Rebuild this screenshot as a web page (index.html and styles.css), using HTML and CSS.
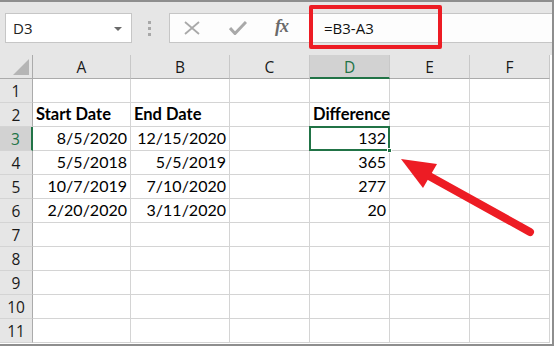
FILE: index.html
```html
<!DOCTYPE html>
<html>
<head>
<meta charset="utf-8">
<link rel="stylesheet" href="styles.css">
</head>
<body>
<div class="frame">
  <div class="toolbar">
    <div class="namebox">
      <span class="name">D3</span>
      <span class="caret"></span>
    </div>
    <div class="grip"><i></i><i></i><i></i></div>
    <div class="formula">
      <div class="icons">
        <svg class="ico" width="16" height="14" viewBox="0 0 16 14"><path d="M1 1 L15 13 M15 1 L1 13" stroke="#a9a9a9" stroke-width="1.8" fill="none"/></svg>
        <svg class="ico" width="18" height="14" viewBox="0 0 18 14"><path d="M1 7 L6 12.5 L17 1" stroke="#a9a9a9" stroke-width="3" fill="none"/></svg>
        <span class="fx">fx</span>
      </div>
      <div class="ftext">=B3-A3</div>
      <div class="redbox"></div>
    </div>
  </div>
  <div class="sheet">
    <div class="grid">
      <div class="hd corner"><span class="tri"></span></div>
      <div class="hd col">A</div>
      <div class="hd col">B</div>
      <div class="hd col">C</div>
      <div class="hd col sel">D</div>
      <div class="hd col">E</div>
      <div class="hd col">F</div>

      <div class="hd row">1</div>
      <div class="c"></div><div class="c"></div><div class="c"></div><div class="c"></div><div class="c"></div><div class="c"></div>

      <div class="hd row">2</div>
      <div class="c b">Start Date</div><div class="c b">End Date</div><div class="c"></div><div class="c b">Difference</div><div class="c"></div><div class="c"></div>

      <div class="hd row rsel">3</div>
      <div class="c n">8/5/2020</div><div class="c n">12/15/2020</div><div class="c"></div><div class="c n active">132<span class="handle"></span></div><div class="c"></div><div class="c"></div>

      <div class="hd row">4</div>
      <div class="c n">5/5/2018</div><div class="c n">5/5/2019</div><div class="c"></div><div class="c n">365</div><div class="c"></div><div class="c"></div>

      <div class="hd row">5</div>
      <div class="c n">10/7/2019</div><div class="c n">7/10/2020</div><div class="c"></div><div class="c n">277</div><div class="c"></div><div class="c"></div>

      <div class="hd row">6</div>
      <div class="c n">2/20/2020</div><div class="c n">3/11/2020</div><div class="c"></div><div class="c n">20</div><div class="c"></div><div class="c"></div>

      <div class="hd row">7</div>
      <div class="c"></div><div class="c"></div><div class="c"></div><div class="c"></div><div class="c"></div><div class="c"></div>
      <div class="hd row">8</div>
      <div class="c"></div><div class="c"></div><div class="c"></div><div class="c"></div><div class="c"></div><div class="c"></div>
      <div class="hd row">9</div>
      <div class="c"></div><div class="c"></div><div class="c"></div><div class="c"></div><div class="c"></div><div class="c"></div>
      <div class="hd row">10</div>
      <div class="c"></div><div class="c"></div><div class="c"></div><div class="c"></div><div class="c"></div><div class="c"></div>
      <div class="hd row">11</div>
      <div class="c"></div><div class="c"></div><div class="c"></div><div class="c"></div><div class="c"></div><div class="c"></div>
    </div>
    <svg class="arrow" width="554" height="346" viewBox="0 0 554 346">
      <line x1="530" y1="232" x2="420" y2="171" stroke="#ed1c24" stroke-width="8" stroke-linecap="round"/>
      <polygon points="401,159 437,164 423,188" fill="#ed1c24"/>
    </svg>
  </div>
</div>
</body>
</html>
```

FILE: styles.css
```css
* { box-sizing: border-box; }
html, body { margin: 0; padding: 0; background: #fff; }
.frame {
  position: relative;
  width: 554px;
  height: 346px;
  overflow: hidden;
  border-top: 2px solid #8e8e8e;
  border-right: 2px solid #8e8e8e;
  border-bottom: 2px solid #8e8e8e;
  background: #fff;
}
.toolbar {
  height: 53px;
  background: #e6e6e6;
  display: flex;
  align-items: flex-start;
  padding-top: 11px;
}
.namebox {
  margin-left: 5px;
  width: 127px;
  height: 30px;
  background: #fff;
  border: 1px solid #c6c6c6;
  display: flex;
  align-items: center;
  justify-content: space-between;
  padding: 0 9px 0 7px;
}
.name {
  font-family: "Open Sans", sans-serif;
  font-size: 15px;
  color: #222;
}
.caret {
  width: 0; height: 0;
  border-left: 4px solid transparent;
  border-right: 4px solid transparent;
  border-top: 4px solid #6a6a6a;
  margin-top: 1px;
}
.grip {
  width: 37px;
  display: flex;
  flex-direction: column;
  align-items: center;
  gap: 3px;
  padding-top: 8px;
  padding-right: 2px;
}
.grip i { display: block; width: 3px; height: 3px; background: #a8a8a8; }
.formula {
  position: relative;
  flex: 1;
  height: 30px;
  background: #fdfdfd;
  border: 1px solid #c6c6c6;
  border-right: none;
  display: flex;
  align-items: center;
}
.icons {
  width: 139px;
  display: flex;
  align-items: center;
  padding-left: 14px;
}
.ico { display: block; margin-right: 29px; }
.icons .ico + .ico { margin-right: 28px; }
.fx {
  font-family: "Liberation Serif", serif;
  font-style: italic;
  font-weight: bold;
  font-size: 18px;
  color: #6a6a6a;
  margin-top: -3px;
  letter-spacing: -1px;
}
.ftext {
  padding-left: 15px;
  font-family: "Open Sans", sans-serif;
  font-size: 15px;
  color: #111;
}
.redbox {
  position: absolute;
  left: 139px;
  top: -9px;
  width: 133px;
  height: 44px;
  border: 4px solid #ed1c24;
  border-radius: 2px;
}
.sheet { position: relative; }
.grid {
  display: grid;
  grid-template-columns: 33px 98px 99px 80px 80px 80px 80px;
  grid-template-rows: 24px repeat(11, 24px);
}
.hd {
  background: #e6e6e6;
  font-family: "Open Sans", sans-serif;
  font-size: 15.5px;
  color: #1a1a1a;
  display: flex;
  align-items: center;
  justify-content: center;
}
.col {
  border-right: 1px solid #c8c8c8;
  border-bottom: 1px solid #ababab;
  padding-top: 1px;
}
.col.sel {
  background: #d2d2d2;
  color: #217346;
  border-bottom: 2px solid #217346;
  padding-top: 2px;
}
.corner {
  border-right: 1px solid #ababab;
  border-bottom: 1px solid #ababab;
  position: relative;
}
.tri {
  position: absolute;
  left: 13px;
  top: 4px;
  width: 0; height: 0;
  border-left: 16px solid transparent;
  border-bottom: 16px solid #b5b5b5;
}
.row {
  border-right: 1px solid #ababab;
  border-bottom: 1px solid #d4d4d4;
  padding-top: 1px;
}
.row.rsel {
  background: #d2d2d2;
  color: #217346;
  border-right: 2px solid #217346;
}
.c {
  border-right: 1px solid #d4d4d4;
  border-bottom: 1px solid #d4d4d4;
  font-family: "Lato", sans-serif;
  font-size: 16px;
  color: #000;
  display: flex;
  align-items: flex-end;
  padding: 0 3px 2px 3px;
  white-space: nowrap;
  line-height: 20px;
}
.c.b { font-weight: bold; font-size: 16.5px; }
.c.n { justify-content: flex-end; }
.c.active { position: relative; }
.c.active::after {
  content: "";
  position: absolute;
  left: -1px;
  top: -1px;
  right: -1px;
  bottom: -1px;
  border: 2px solid #217346;
}
.handle {
  position: absolute;
  right: -3px;
  bottom: -3px;
  width: 5px;
  height: 5px;
  background: #217346;
  border: 1px solid #fff;
  z-index: 2;
}
.arrow {
  position: absolute;
  left: 0;
  top: -55px;
  pointer-events: none;
}
```
